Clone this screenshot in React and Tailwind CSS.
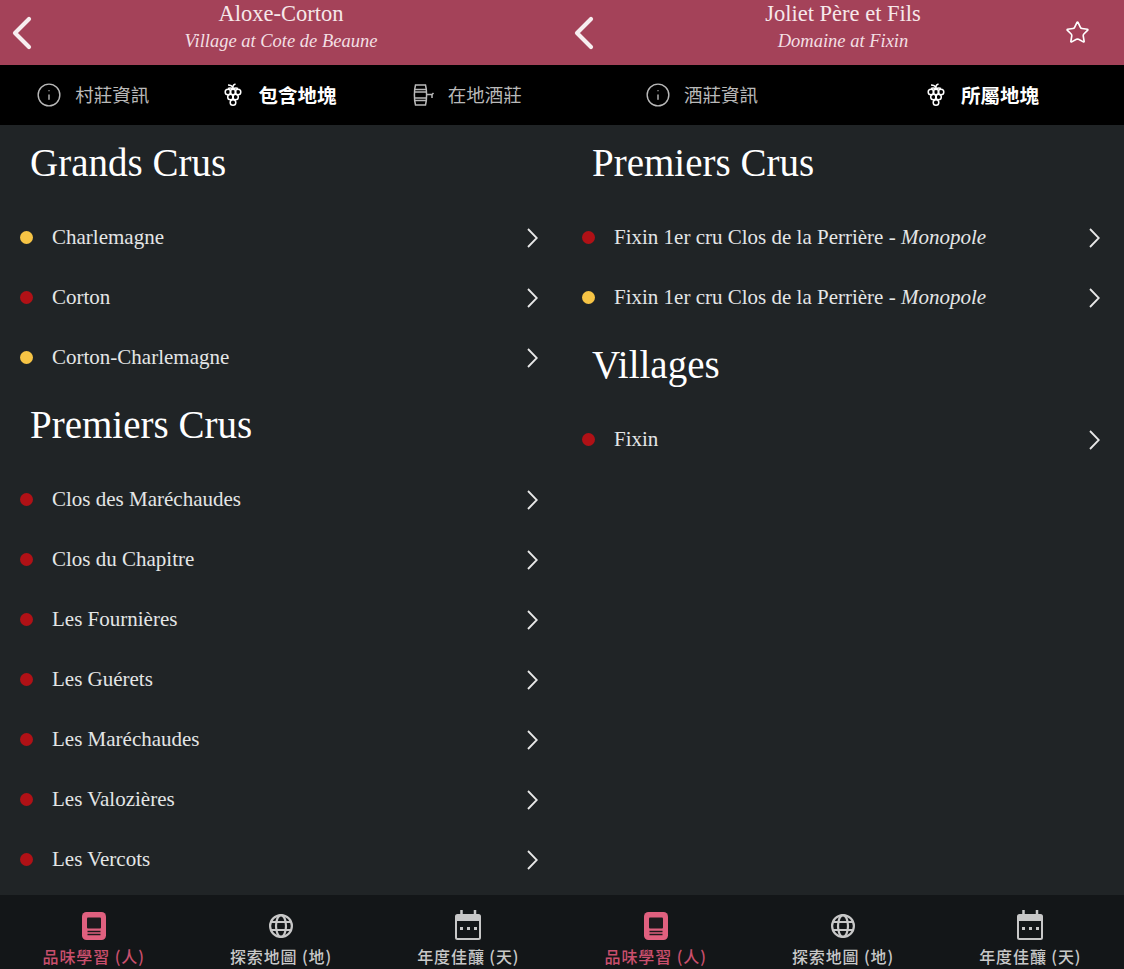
import { Info, Star } from 'lucide-react'

const serif = "font-['Liberation_Serif',serif]"
const cjk = "font-['Noto_Sans_CJK_TC','Noto_Sans',sans-serif]"

function BackIcon() {
  return (
    <svg width="22" height="34" viewBox="0 0 22 34" fill="none" stroke="#f7eef0" strokeWidth="4.200" strokeLinecap="round" strokeLinejoin="round">
      <path d="M18 3 4 17l14 14" />
    </svg>
  )
}

function RowChevron() {
  return (
    <svg width="11" height="20" viewBox="0 0 11 20" fill="none" stroke="#e8e8e8" strokeWidth="1.800" className="mt-[2px] mr-px shrink-0">
      <path d="m1 1 8.800 9-8.800 9" />
    </svg>
  )
}

function GrapeIcon() {
  return (
    <svg width="20" height="24" viewBox="0 0 20 24" fill="none" stroke="currentColor" strokeWidth="1.500">
      <circle cx="5" cy="9" r="2.800" />
      <circle cx="10" cy="9" r="2.800" />
      <circle cx="15" cy="9" r="2.800" />
      <circle cx="7.500" cy="14" r="2.800" />
      <circle cx="12.500" cy="14" r="2.800" />
      <circle cx="10" cy="19.500" r="2.800" />
      <path d="M5 5.500c2-.8 3.500-.5 5 .8 1.500-1.300 3-1.600 5-.8M10 6V3.500c0-1 1-2 2.500-2.500M5 2c2 0 4 .6 5 2.500" />
    </svg>
  )
}

function BarrelIcon() {
  return (
    <svg width="22" height="22" viewBox="0 0 22 22" fill="none" stroke="currentColor" strokeWidth="1.500">
      <path d="M2.500 1h10c.7 2.500 1.100 5 1.100 10s-.4 7.500-1.100 10h-10c-.7-2.500-1.100-5-1.100-10S1.800 3.500 2.500 1Z" />
      <path d="M1.800 5.500h11.400M1.500 8h12M1.500 14h12M1.800 16.500h11.400" />
      <path d="M14 10.500h5l1.500-1.500M19 10.500v3.500" />
    </svg>
  )
}

function BookIcon() {
  return (
    <svg width="24" height="28" viewBox="0 0 24 28">
      <rect width="24" height="28" rx="4.500" fill="#e0607f" />
      <rect x="5" y="5.500" width="14" height="11" rx="1" fill="#1d1a1d" />
      <path d="M5.500 19.500h13M5.500 22.500h13" stroke="#1d1a1d" strokeWidth="1.500" />
    </svg>
  )
}

function GlobeIcon() {
  return (
    <svg width="24" height="24" viewBox="0 0 24 24" fill="none" stroke="#c8c8c8" strokeWidth="2.200" className="mb-[2px]">
      <circle cx="12" cy="12" r="10.900" />
      <ellipse cx="12" cy="12" rx="5" ry="10.900" />
      <path d="M2 8h20M2 16h20" />
    </svg>
  )
}

function CalendarIcon() {
  return (
    <svg width="26" height="30" viewBox="0 0 26 30" fill="none" stroke="#c8c8c8">
      <rect x="1" y="5" width="24" height="24" rx="1.500" strokeWidth="2" />
      <path d="M1 8h24" strokeWidth="6" />
      <path d="M6.500 0v4M20 0v4" strokeWidth="2.500" />
      <path d="M5 18.500h3M12 18.500h3M19 18.500h3" strokeWidth="3" />
    </svg>
  )
}

function Row({ color, name, mono }) {
  return (
    <div className="h-[60px] flex items-center pl-[20px] pr-[23px]">
      <span className={`w-[13px] h-[13px] rounded-full shrink-0 ${color === 'y' ? 'bg-[#f6c445]' : 'bg-[#b01116]'}`} />
      <div className={`ml-[19px] flex-1 pt-[2px] text-[21px] text-[#e4e6e6] ${serif}`}>
        {name}
        {mono && <i> - Monopole</i>}
      </div>
      <RowChevron />
    </div>
  )
}

function Heading({ children }) {
  return (
    <h2 className={`h-[82px] pl-[30px] pt-[10px] text-[39px] leading-[56px] text-white ${serif}`}>{children}</h2>
  )
}

function Tab({ icon, label, active }) {
  return (
    <div className={`flex-1 flex items-center justify-center pr-[2px] ${active ? 'text-white font-bold text-[19.5px] gap-[15px]' : 'text-[#b9b9b9] text-[18.5px] gap-[13px]'} ${cjk}`}>
      {icon}
      <span>{label}</span>
    </div>
  )
}

function NavItem({ icon, label, active }) {
  return (
    <div className="flex-1 flex flex-col items-center">
      <div className="h-[45px] flex items-end justify-center">{icon}</div>
      <span className={`mt-[4px] text-[16px] leading-[24px] font-medium tracking-[0.9px] ${active ? 'text-[#c94f6d]' : 'text-[#c8c8c8]'} ${cjk}`}>{label}</span>
    </div>
  )
}

function Panel({ title, sub, star, tabs, children }) {
  return (
    <div className="h-[969px] flex flex-col overflow-hidden">
      <header className="h-[65px] shrink-0 bg-[#a44259] flex text-white">
        <div className="w-[94px] flex items-center pl-[11px]">
          <BackIcon />
        </div>
        <div className={`flex-1 pt-px text-center ${serif}`}>
          <div className="text-[22.5px] leading-[26px] text-[#f6e8ea]">{title}</div>
          <div className="text-[18.5px] leading-[28px] italic text-[#f3dfe3]">{sub}</div>
        </div>
        <div className="w-[94px] flex items-center justify-center">
          {star && <Star size={25} strokeWidth={1.6} className="text-white" />}
        </div>
      </header>
      <div className="h-[60px] shrink-0 bg-black flex">{tabs}</div>
      <main className="flex-1 min-h-0 overflow-hidden bg-[#202426] pb-[6px]">
        <div className="h-full overflow-hidden">{children}</div>
      </main>
      <nav className="h-[74px] shrink-0 bg-[#131618] flex">
        <NavItem active icon={<BookIcon />} label="品味學習 (人)" />
        <NavItem icon={<GlobeIcon />} label="探索地圖 (地)" />
        <NavItem icon={<CalendarIcon />} label="年度佳釀 (天)" />
      </nav>
    </div>
  )
}

export default function App() {
  return (
    <div className="w-[1124px] h-[969px] grid grid-cols-2 overflow-hidden">
      <Panel
        title="Aloxe-Corton"
        sub="Village at Cote de Beaune"
        tabs={
          <>
            <Tab icon={<Info size={26} strokeWidth={1.3} />} label="村莊資訊" />
            <Tab active icon={<GrapeIcon />} label="包含地塊" />
            <Tab icon={<BarrelIcon />} label="在地酒莊" />
          </>
        }
      >
        <Heading>Grands Crus</Heading>
        <Row color="y" name="Charlemagne" />
        <Row color="r" name="Corton" />
        <Row color="y" name="Corton-Charlemagne" />
        <Heading>Premiers Crus</Heading>
        <Row color="r" name="Clos des Maréchaudes" />
        <Row color="r" name="Clos du Chapitre" />
        <Row color="r" name="Les Fournières" />
        <Row color="r" name="Les Guérets" />
        <Row color="r" name="Les Maréchaudes" />
        <Row color="r" name="Les Valozières" />
        <Row color="r" name="Les Vercots" />
      </Panel>
      <Panel
        title="Joliet Père et Fils"
        sub="Domaine at Fixin"
        star
        tabs={
          <>
            <Tab icon={<Info size={26} strokeWidth={1.3} />} label="酒莊資訊" />
            <Tab active icon={<GrapeIcon />} label="所屬地塊" />
          </>
        }
      >
        <Heading>Premiers Crus</Heading>
        <Row color="r" name="Fixin 1er cru Clos de la Perrière" mono />
        <Row color="y" name="Fixin 1er cru Clos de la Perrière" mono />
        <Heading>Villages</Heading>
        <Row color="r" name="Fixin" />
      </Panel>
    </div>
  )
}
